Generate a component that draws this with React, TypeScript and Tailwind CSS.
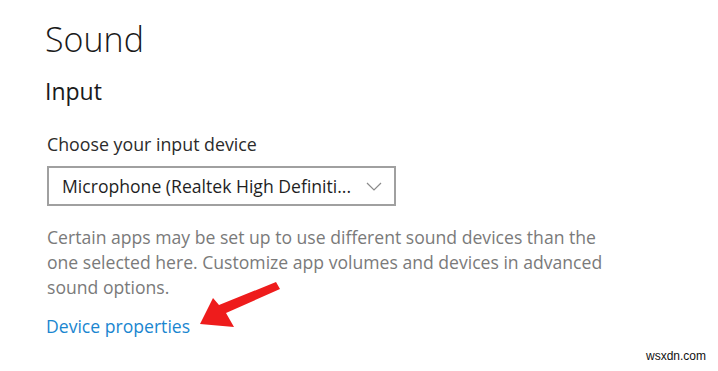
const paragraph = [
  "Certain apps may be set up to use different sound devices than the",
  "one selected here. Customize app volumes and devices in advanced",
  "sound options.",
];

export default function App() {
  return (
    <div
      className="relative w-[718px] h-[371px] bg-white overflow-hidden"
      style={{ fontFamily: '"Open Sans", "Noto Sans", sans-serif' }}
    >
      <div className="pl-[45px] pt-[19px]">
        {/* HEADER */}
        <h1 className="text-[34px] leading-[40px] font-light text-[#1a1a1a]">Sound</h1>
        <h2 className="mt-[17px] text-[23px] leading-[30px] text-[#1a1a1a]">Input</h2>

        {/* DEVICE PICKER */}
        <p className="mt-[27px] ml-[2px] text-[17.8px] leading-[22px] text-[#2b2b2b]">
          Choose your input device
        </p>
        <div className="mt-[11px] ml-[2px] w-[349px] h-[40px] border-2 border-[#a0a0a0] flex items-center justify-between pl-[13px] pr-[12px]">
          <span className="text-[17.6px] text-[#1f1f1f] whitespace-nowrap">
            Microphone (Realtek High Definiti...
          </span>
          <svg width="16" height="9" viewBox="0 0 16 9" fill="none">
            <path d="M1 1l7 7 7-7" stroke="#8a8a8a" strokeWidth="1.2" />
          </svg>
        </div>

        {/* NOTE */}
        <p className="mt-[19px] ml-[2px] text-[17.6px] leading-[25px] text-[#7a7a7a]">
          {paragraph.map((line) => (
            <span key={line} className="block whitespace-nowrap">
              {line}
            </span>
          ))}
        </p>

        <a className="block mt-[14px] ml-[1px] text-[17.6px] leading-[24px] text-[#1a86d0]">
          Device properties
        </a>
      </div>

      {/* RED ARROW */}
      <svg className="absolute left-0 top-0" width="718" height="371">
        <polygon
          points="200,324 213,298 219,305 276,282 280,289 226,313 234,327"
          fill="#ee1c1c"
        />
      </svg>

      <span
        className="absolute right-[12px] bottom-[6px] text-[12px] text-[#111]"
        style={{ fontFamily: '"Liberation Sans", Arial, sans-serif' }}
      >
        wsxdn.com
      </span>
    </div>
  );
}
